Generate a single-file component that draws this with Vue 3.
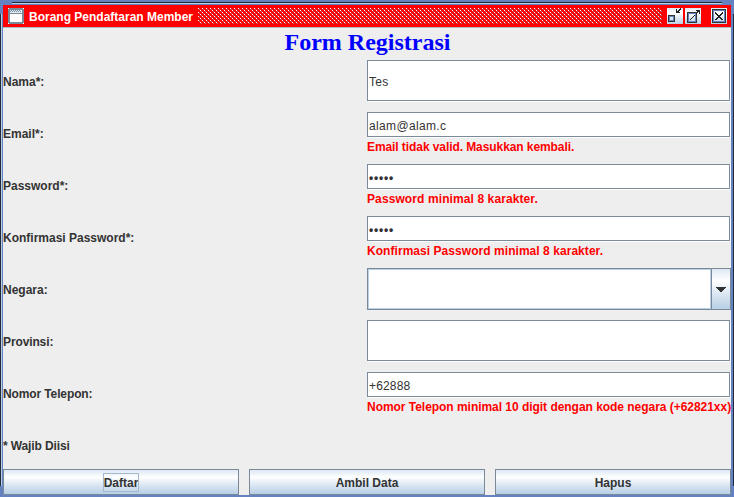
<script setup>
const rows = [
  { label: 'Nama*:', value: 'Tes' },
  { label: 'Email*:', value: 'alam@alam.c', error: 'Email tidak valid. Masukkan kembali.', tone: 'tight' },
  { label: 'Password*:', value: '•••••', password: true, error: 'Password minimal 8 karakter.', tone: 'loose' },
  { label: 'Konfirmasi Password*:', value: '•••••', password: true, error: 'Konfirmasi Password minimal 8 karakter.', tone: 'medium' },
  { label: 'Negara:', combo: true },
  { label: 'Provinsi:', value: '', labelTight: true },
  { label: 'Nomor Telepon:', value: '+62888', numeric: true, error: 'Nomor Telepon minimal 10 digit dengan kode negara (+62821xx)', tone: 'snug', labelTight: true },
]
const buttons = ['Daftar', 'Ambil Data', 'Hapus']
</script>

<template>
  <div class="frame">
    <i class="edge top"></i><i class="edge left"></i><i class="edge right"></i>
    <header class="titlebar">
      <svg class="app-icon" width="16" height="16" shape-rendering="crispEdges">
        <path fill="#7a8a99" d="M0 0h16v16H0z" />
        <path fill="#fff" d="M2 6h12v8H2z" />
        <path fill="#e4edf5" d="M2 2h12v3H2z" />
        <path fill="#7a8a99" d="M3 2h1v1H3zM5 2h1v1H5zM7 2h1v1H7zM9 2h1v1H9zM11 2h1v1h-1zM2 3h1v1H2zM4 3h1v1H4zM6 3h1v1H6zM8 3h1v1H8zM10 3h1v1h-1zM12 3h1v1h-1z" />
        <path fill="#fff" d="M0 0h1v1H0zM15 0h1v1h-1zM0 15h1v1H0zM15 15h1v1h-1z" />
      </svg>
      <span class="title">Borang Pendaftaran Member</span>
      <svg class="bumps" width="464" height="16" shape-rendering="crispEdges">
        <defs>
          <pattern id="bump" width="4" height="4" patternUnits="userSpaceOnUse">
            <path fill="#fff" d="M0 0h1v1H0zM2 2h1v1H2z" />
            <path fill="#7a8a99" d="M1 1h1v1H1zM3 3h1v1H3z" />
          </pattern>
        </defs>
        <rect width="464" height="16" fill="url(#bump)" />
      </svg>
      <svg class="control min" width="16" height="16" shape-rendering="crispEdges">
        <defs>
          <linearGradient id="metal" x2="0" y2="1">
            <stop stop-color="#dde8f3" /><stop offset=".3" stop-color="#fff" /><stop offset="1" stop-color="#b8cfe5" />
          </linearGradient>
        </defs>
        <path fill="url(#metal)" d="M0 0h16v16H0z" />
        <path fill="none" stroke="#333" d="M1.500 7.500h6v6h-6z" />
        <path fill="none" stroke="#6382bf" d="M2.500 8.500h4v4h-4z" />
        <path fill="#222" d="M9 1h1v4H9zM9 4h4v1H9zM10 3h2v1h-2zM11 2h2v1h-2zM12 1h2v1h-2zM13 0h1v1h-1z" />
      </svg>
      <svg class="control max" width="16" height="16" shape-rendering="crispEdges">
        <path fill="url(#metal)" d="M0 0h16v16H0z" />
        <path fill="none" stroke="#333" d="M2.500 4.500h9v10h-9z" />
        <path fill="none" stroke="#6382bf" d="M3.500 5.500h7v8h-7z" />
        <path fill="#222" d="M11 2h4v1h-4zM14 2h1v4h-1zM12 3h2v1h-2zM12 4h1v1h-1zM11 5h1v1h-1zM9 7h1v1H9zM8 8h1v1H8zM7 9h1v1H7zM6 10h1v1H6zM5 11h1v1H5z" />
      </svg>
      <svg class="control close" width="16" height="16" shape-rendering="crispEdges">
        <path fill="url(#metal)" d="M0 0h16v16H0z" />
        <path fill="none" stroke="#333" d="M1.500 1.500h13v13h-13z" />
        <path fill="none" stroke="#6382bf" d="M2.500 2.500h11v11h-11z" />
        <path fill="#222" d="M4 4h1v1H4zM11 4h1v1h-1zM4 5h2v1H4zM10 5h2v1h-2zM5 6h2v1H5zM9 6h2v1H9zM6 7h4v1H6zM7 8h2v1H7zM6 9h4v1H6zM5 10h2v1H5zM9 10h2v1H9zM4 11h2v1H4zM10 11h2v1h-2z" />
      </svg>
    </header>
    <main class="content">
      <h1><span>Form Registrasi</span></h1>
      <div v-for="row in rows" :key="row.label" class="row">
        <label :class="{ narrow: row.labelTight }">{{ row.label }}</label>
        <div class="cell">
          <div v-if="row.combo" class="combo">
            <div class="combo-value"></div>
            <div class="arrow">
              <svg width="10" height="5" shape-rendering="crispEdges"><path fill="#333" d="M0 0h10v1H0zM1 1h8v1H1zM2 2h6v1H2zM3 3h4v1H3zM4 4h2v1H4z" /></svg>
            </div>
          </div>
          <div v-else class="field" :class="{ password: row.password, numeric: row.numeric }"><span>{{ row.value }}</span></div>
          <p v-if="row.error" :class="row.tone"><span>{{ row.error }}</span></p>
        </div>
      </div>
      <div class="row note"><label class="narrow">* Wajib Diisi</label></div>
      <footer>
        <button v-for="(name, i) in buttons" :key="name"><span :class="{ focused: i === 0 }">{{ name }}</span></button>
      </footer>
    </main>
  </div>
</template>

<style>
body { margin: 0; overflow: hidden; }
</style>

<style scoped>
* { box-sizing: border-box; }
svg { flex: none; }
.frame { position: relative; width: 734px; height: 497px; padding: 5px 3px 2px; background: #6382bf; font: bold 12px "Liberation Sans", Arial, sans-serif; color: #333; white-space: nowrap; }
.edge { position: absolute; }
.top { left: 12px; top: 2px; width: 710px; height: 2px; background: #222b3a; border-bottom: 1px solid #b8cfe5; }
.left { left: 0; top: 14px; width: 2px; height: 472px; background: #222b3a; border-right: 1px solid #b8cfe5; }
.right { right: 0; top: 14px; width: 1px; height: 472px; background: #222b3a; }
.titlebar { width: 728px; height: 23px; padding: 3px 4px 0 5px; display: flex; background: #f00; border-bottom: 1px solid #b8b8c0; color: #fff; }
.title { width: 164px; margin: 1px 0 0 5px; line-height: 16px; }
.bumps { margin-left: 5px; }
.min { margin-left: 5px; }
.max { margin-left: 2px; }
.close { margin-left: 10px; }
.content { width: 728px; height: 467px; background: #eee; }
h1 { margin: 0; height: 32px; padding-left: 1px; font: bold 24px/28px "Liberation Serif", "Times New Roman", serif; color: #00f; text-align: center; }
.row { height: 42px; margin-bottom: 10px; display: grid; grid-template-columns: 364px 364px; }
label { line-height: 45px; height: 42px; }
.narrow { letter-spacing: -.12px; }
.cell { display: flex; flex-direction: column; min-width: 0; }
.field { flex: 1; display: flex; align-items: center; margin: 0 1px 1px 0; padding: 2px 1px 0; background: #fff; border: 1px solid #7a8a99; box-shadow: 1px 1px #fff; font-weight: normal; letter-spacing: .35px; }
.password { letter-spacing: .8px; font-weight: bold; }
.numeric { letter-spacing: .15px; }
p { margin: 0; height: 16px; padding-top: 1px; line-height: 16px; color: #f00; }
.tight { letter-spacing: -.08px; }
.loose { letter-spacing: .1px; }
.medium { letter-spacing: .05px; }
.snug { letter-spacing: -.035px; }
.combo { height: 42px; display: flex; border: 1px solid #7a8a99; }
.combo-value { flex: 1; background: #fff; border: 1px solid #b8cfe5; }
.arrow { width: 19px; border-left: 1px solid #7a8a99; display: flex; align-items: center; justify-content: center; background: linear-gradient(#dde8f3, #fff 30%, #dde8f3 60%, #b8cfe5); }
.note { margin-bottom: 3px; }
footer { display: grid; grid-template-columns: repeat(3, 236px); gap: 10px; }
button { height: 26px; padding: 2px 0 0; border: 1px solid #7a8a99; border-radius: 0; background: linear-gradient(#dde8f3, #fff 30%, #dde8f3 60%, #b8cfe5); color: #333; font: inherit; display: flex; align-items: center; justify-content: center; }
button span { line-height: 18px; }
.focused { height: 17px; margin-bottom: 2px; outline: 1px solid #a3b8cc; }
</style>
